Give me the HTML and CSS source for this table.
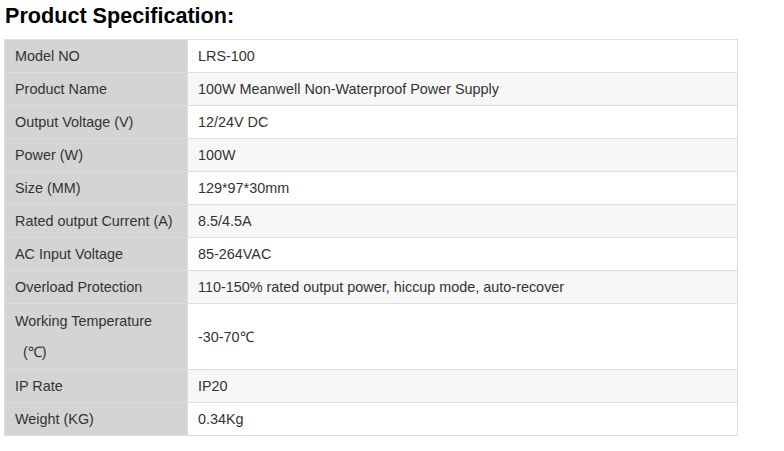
FILE: index.html
```html
<!DOCTYPE html>
<html>
<head>
<meta charset="utf-8">
<link rel="stylesheet" href="styles.css">
</head>
<body>
<div class="page">
  <h2 class="title">Product Specification:</h2>
  <table class="spec">
    <colgroup><col class="c1"><col class="c2"></colgroup>
    <tbody>
      <tr><td class="lab">Model NO</td><td class="val">LRS-100</td></tr>
      <tr><td class="lab">Product Name</td><td class="val">100W Meanwell Non-Waterproof Power Supply</td></tr>
      <tr><td class="lab">Output Voltage (V)</td><td class="val">12/24V DC</td></tr>
      <tr><td class="lab">Power (W)</td><td class="val">100W</td></tr>
      <tr><td class="lab">Size (MM)</td><td class="val">129*97*30mm</td></tr>
      <tr><td class="lab">Rated output Current (A)</td><td class="val">8.5/4.5A</td></tr>
      <tr><td class="lab">AC Input Voltage</td><td class="val">85-264VAC</td></tr>
      <tr><td class="lab">Overload Protection</td><td class="val">110-150% rated output power, hiccup mode, auto-recover</td></tr>
      <tr class="tall"><td class="lab">Working Temperature<br><span class="ind">(℃)</span></td><td class="val">-30-70℃</td></tr>
      <tr><td class="lab">IP Rate</td><td class="val">IP20</td></tr>
      <tr><td class="lab">Weight (KG)</td><td class="val">0.34Kg</td></tr>
    </tbody>
  </table>
</div>
</body>
</html>
```
FILE: styles.css
```css
html, body {
  margin: 0;
  padding: 0;
  background: #fff;
}
.page {
  padding: 4px 4px 0 4px;
  font-family: "Liberation Sans", Arial, sans-serif;
}
.title {
  margin: 0 0 11px 1px;
  font-size: 21.6px;
  line-height: 24px;
  font-weight: bold;
  color: #000;
}
.spec {
  border-collapse: collapse;
  width: 734px;
  font-size: 14.4px;
  color: #333;
}
.c1 { width: 183px; }
.spec td {
  border: 1px solid #dddddd;
  padding: 0 10px;
  line-height: 32px;
  vertical-align: middle;
  text-align: left;
}
.spec td.lab {
  background: #d4d4d4;
}
.spec td.val {
  background: #fff;
}
.spec tr:nth-child(even) td.val {
  background: #f7f7f7;
}
.spec tr.tall td {
  line-height: 31px;
  padding-top: 2px;
  padding-bottom: 1px;
}
.ind {
  padding-left: 8px;
}
```
